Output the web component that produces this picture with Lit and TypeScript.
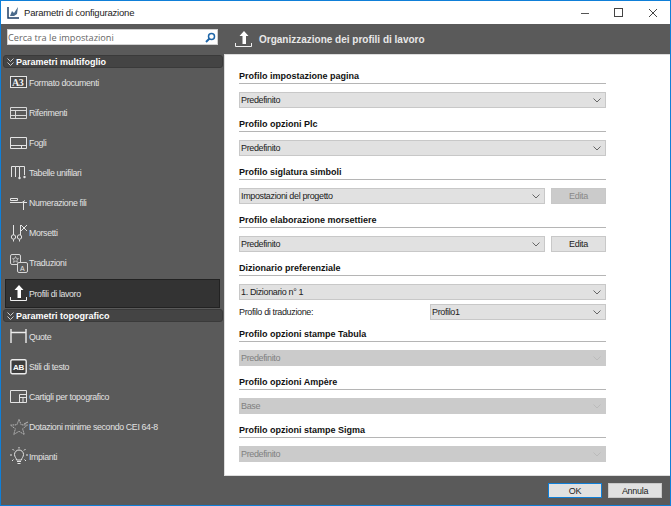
import {LitElement, html, css, svg} from 'lit';
import {customElement} from 'lit/decorators.js';

// sidebar icons, all on a 20x20 box
const icons: Record<string, any> = {
  a3: svg`<rect x="0.5" y="3.500" width="16" height="11" fill="#4a4a4a" stroke="#e4e4e4"/><text x="2" y="13" font-family="Liberation Serif" font-weight="700" font-size="10" fill="#f2f2f2">A3</text>`,
  rif: svg`<path d="M0.5 4.500h16v11h-16z M0.5 7.500h16 M0.5 12.500h16 M5.500 7.500v8" fill="none" stroke="#d8d8d8"/>`,
  fogli: svg`<path d="M0.5 4.500h16v11h-16z M0.5 12.500h16 M11.500 12.500v3" fill="none" stroke="#e4e4e4"/>`,
  tab: svg`<path d="M1.500 14V3.500h4V14 M5.500 3.500h4V14 M9.500 3.500h5V12" fill="none" stroke="#e4e4e4"/><circle cx="9.500" cy="15" r="1.200" fill="#e4e4e4"/><circle cx="14.500" cy="14" r="1.200" fill="#e4e4e4"/>`,
  num: svg`<path d="M0.5 5.500h7v2h-7z M0 9.500h12l3-2 M12.500 9.500H17 M13.500 10v7" fill="none" stroke="#e4e4e4"/>`,
  mors: svg`<path d="M3.500 2v10 M10.500 2v10 M11 2l6 6 M17 2l-6 6" fill="none" stroke="#e4e4e4"/><circle cx="3.500" cy="14" r="2.200" fill="none" stroke="#e4e4e4"/><circle cx="9.500" cy="14" r="2.200" fill="none" stroke="#e4e4e4"/><path d="M3.500 16.500v2 M9.500 16.500v2" stroke="#e4e4e4"/>`,
  trad: svg`<rect x="0.5" y="1.500" width="10" height="10" rx="1.500" fill="none" stroke="#d8d8d8"/><path d="M5.500 3.500l1 2.200h2l-1.600 1.500.6 2.200-2-1.200-2 1.200.6-2.200-1.600-1.500h2z" fill="none" stroke="#d8d8d8" stroke-width="0.7"/><rect x="7.500" y="9.500" width="10" height="10" rx="1.500" fill="#5a5a5a" stroke="#d8d8d8"/><text x="10" y="17.500" font-family="Liberation Sans" font-size="7" fill="#e4e4e4">A</text>`,
  prof: svg`<path d="M9 1l4.500 5H11v8H7.500V6H4.500z" fill="#fff"/><path d="M0.5 13v3.500h16V13" fill="none" stroke="#f0f0f0"/>`,
  quote: svg`<path d="M1 2v14 M16 2v14 M1 5.500h15" fill="none" stroke="#ececec" stroke-width="1.400"/>`,
  stili: svg`<rect x="0.8" y="2.800" width="15.400" height="14" rx="1.500" fill="#3d3d3d" stroke="#ececec" stroke-width="1.400"/><text x="3" y="13" font-family="Liberation Sans" font-weight="700" font-size="8" fill="#fff">AB</text>`,
  cart: svg`<path d="M0.5 3.500h16v12h-16z M9.500 15.500v-8h7 M9.500 10.500h7 M13 10.500v5" fill="none" stroke="#e4e4e4"/>`,
  dot: svg`<path d="M9 2.500l2.200 5.300 6.300.3-4.900 3.700 1.700 5.700L9 14.300l-5.300 3.200 1.700-5.700L.5 8.100l6.300-.3z" fill="none" stroke="#b8b8b8" stroke-dasharray="1.500 .7"/><path d="M14 7l4-2" stroke="#b8b8b8"/>`,
  imp: svg`<path d="M6.500 13c0-2-2-3-2-5.500a4.500 4.500 0 0 1 9 0c0 2.500-2 3.500-2 5.500z M7 14.500h4 M7.500 16.500h3" fill="none" stroke="#e4e4e4"/><path d="M9 0v1.500 M2.500 2l1.500 1.500 M15.500 2L14 3.500 M0 8h2 M16 8h2 M3.500 12.500l-1.500 1.500 M14.500 12.500l1.500 1.500" stroke="#e4e4e4"/>`,
};

const multi = [
  ['a3', 'Formato documenti'],
  ['rif', 'Riferimenti'],
  ['fogli', 'Fogli'],
  ['tab', 'Tabelle unifilari'],
  ['num', 'Numerazione fili'],
  ['mors', 'Morsetti'],
  ['trad', 'Traduzioni'],
  ['prof', 'Profili di lavoro'],
];
const topo = [
  ['quote', 'Quote'],
  ['stili', 'Stili di testo'],
  ['cart', 'Cartigli per topografico'],
  ['dot', 'Dotazioni minime secondo CEI 64-8'],
  ['imp', 'Impianti'],
];

@customElement('app-root')
export class AppRoot extends LitElement {
  static styles = css`
    :host {
      display: block;
      font-family: "Liberation Sans", sans-serif;
    }
    .window {
      width: 671px;
      height: 506px;
      box-sizing: border-box;
      border: 1px solid #0f7fd8;
      display: flex;
      flex-direction: column;
      background: #5a5a5a;
      overflow: hidden;
    }
    .titlebar {
      height: 23px;
      background: #fff;
      display: flex;
      align-items: center;
      padding-left: 6px;
      flex: none;
    }
    .titlebar .name {
      font-size: 9.500px;
      letter-spacing: -0.2px;
      color: #222;
      margin-left: 4px;
      flex: 1;
    }
    .winbtn {
      width: 34px;
      height: 23px;
      display: flex;
      align-items: center;
      justify-content: center;
    }
    .body {
      flex: 1;
      display: flex;
      min-height: 0;
    }
    .sidebar {
      width: 223px;
      flex: none;
      padding-top: 5px;
      box-sizing: border-box;
    }
    .search {
      margin-left: 6px;
      width: 211px;
      height: 16px;
      box-sizing: border-box;
      background: #fff;
      border: 1px solid #d0d0d0;
      display: flex;
      align-items: center;
      justify-content: space-between;
      padding: 0 1px 0 0;
      font-family: "Open Sans", sans-serif;
      font-size: 9.200px;
      color: #666;
    }
    .group {
      margin: 0 1px 0 2px;
      height: 13px;
      box-sizing: border-box;
      background: #444;
      border: 1px solid #3a3a3a;
      border-radius: 3px;
      display: flex;
      align-items: center;
      gap: 2px;
      padding-left: 3px;
      font-size: 9px;
      font-weight: 700;
      color: #fff;
    }
    .group.first {
      margin-top: 10px;
    }
    .group.second {
      margin-top: 1px;
    }
    .item {
      height: 30px;
      box-sizing: border-box;
      display: flex;
      align-items: center;
      padding-left: 9px;
      font-size: 8.800px;
      letter-spacing: -0.35px;
      color: #e2e2e2;
    }
    .item svg {
      width: 20px;
      height: 20px;
      flex: none;
      overflow: visible;
      margin-right: -1px;
    }
    .item.sel {
      height: 29px;
      margin: 1px 4px 0 4px;
      background: #333;
      border: 1px solid #222;
      padding-left: 4px;
    }
    .main {
      flex: 1;
      display: flex;
      flex-direction: column;
      min-width: 0;
    }
    .head {
      height: 30px;
      flex: none;
      display: flex;
      align-items: center;
      gap: 6px;
      padding-left: 11px;
      font-size: 10px;
      font-weight: 700;
      color: #e8e8e8;
    }
    .panel {
      flex: 1;
      background: #fff;
      border: 1px solid #ddd;
      border-right: none;
      padding: 15px 0 0 14px;
      box-sizing: border-box;
      min-height: 0;
    }
    .sec {
      width: 367px;
    }
    .sec h3 {
      margin: 0;
      height: 14px;
      box-sizing: border-box;
      line-height: 13px;
      font-size: 9px;
      font-weight: 700;
      color: #111;
      border-bottom: 1px solid #b5b5b5;
    }
    .row {
      display: flex;
      gap: 6px;
      margin-top: 8px;
      margin-bottom: 10px;
      height: 16px;
    }
    .sel-box {
      flex: 1;
      box-sizing: border-box;
      background: #e1e1e1;
      border: 1px solid #c8c8c8;
      display: flex;
      align-items: center;
      justify-content: space-between;
      padding: 0 4px 0 1px;
      font-size: 9px;
      letter-spacing: -0.36px;
      color: #222;
    }
    .sel-box.off {
      background: #cbcbcb;
      border-color: #cbcbcb;
      color: #808080;
    }
    .btn {
      width: 55px;
      flex: none;
      box-sizing: border-box;
      background: #e1e1e1;
      border: 1px solid #c8c8c8;
      display: flex;
      align-items: center;
      justify-content: center;
      font-size: 9px;
      letter-spacing: -0.3px;
      color: #222;
    }
    .btn.off {
      background: #cbcbcb;
      color: #888;
    }
    .row.tight {
      margin-bottom: 4px;
    }
    .row.sub {
      margin-top: 0;
      margin-bottom: 8px;
      align-items: center;
      gap: 0;
      font-size: 9px;
      letter-spacing: -0.36px;
      color: #222;
    }
    .row.sub .lab {
      width: 191px;
      flex: none;
    }
    .row.sub .sel-box {
      height: 16px;
    }
    .footer {
      height: 29px;
      flex: none;
      display: flex;
      justify-content: flex-end;
      align-items: center;
      gap: 6px;
      padding: 0 8px 0 0;
    }
    .footer .btn {
      height: 15px;
      width: 54px;
    }
    .footer .ok {
      border: 1px solid #0f7fd8;
    }
  `;

  chevron(color = '#666') {
    return html`<svg width="8" height="5" viewBox="0 0 8 5"><path d="M.5 .5L4 4l3.500-3.500" fill="none" stroke=${color}/></svg>`;
  }

  dbl() {
    return html`<svg width="7" height="8" viewBox="0 0 7 8"><path d="M.5 .5L3.500 3.500 6.500 .5 M.5 4.500L3.500 7.500 6.500 4.500" fill="none" stroke="#ccc"/></svg>`;
  }

  item(it: string[]) {
    return html`<div class="item ${it[0] === 'prof' ? 'sel' : ''}"><svg viewBox="0 0 20 20">${icons[it[0]]}</svg><span>${it[1]}</span></div>`;
  }

  section(title: string, value: string, off = false, edit = '') {
    return html`<div class="sec"><h3>${title}</h3>
      <div class="row">
        <div class="sel-box ${off ? 'off' : ''}">${value}${this.chevron(off ? '#bbb' : '#666')}</div>
        ${edit ? html`<div class="btn ${edit === 'off' ? 'off' : ''}">Edita</div>` : ''}
      </div></div>`;
  }

  render() {
    return html`<div class="window">
      <div class="titlebar">
        <svg width="13" height="13" viewBox="0 0 13 13"><path d="M1 1v11h11" fill="none" stroke="#1f3f66" stroke-width="1.500"/><path d="M3 10l2-5 2 2 4-6-1 7-3 2z" fill="#4a6a8a"/></svg>
        <span class="name">Parametri di configurazione</span>
        <div class="winbtn"><svg width="10" height="10" viewBox="0 0 10 10"><path d="M1 5.500h8" stroke="#555"/></svg></div>
        <div class="winbtn"><svg width="10" height="10" viewBox="0 0 10 10"><rect x=".5" y=".5" width="8" height="8" fill="none" stroke="#444"/></svg></div>
        <div class="winbtn"><svg width="10" height="10" viewBox="0 0 10 10"><path d="M1 1l8 8 M9 1l-8 8" stroke="#444"/></svg></div>
      </div>
      <div class="body">
        <div class="sidebar">
          <div class="search"><span>Cerca tra le impostazioni</span>
            <svg width="11" height="11" viewBox="0 0 11 11"><circle cx="6.500" cy="4.500" r="3" fill="none" stroke="#1f66a8" stroke-width="1.500"/><path d="M4.500 6.500L1 10" stroke="#1f66a8" stroke-width="2"/></svg>
          </div>
          <div class="group first">${this.dbl()}Parametri multifoglio</div>
          ${multi.map((it) => this.item(it))}
          <div class="group second">${this.dbl()}Parametri topografico</div>
          ${topo.map((it) => this.item(it))}
        </div>
        <div class="main">
          <div class="head">
            <svg width="18" height="18" viewBox="0 0 18 18"><path d="M9 1l4.500 5H11v8H7.500V6H4.500z" fill="#fff"/><path d="M.5 13v3.500h16V13" fill="none" stroke="#f0f0f0"/></svg>
            <span>Organizzazione dei profili di lavoro</span>
          </div>
          <div class="panel">
            ${this.section('Profilo impostazione pagina', 'Predefinito')}
            ${this.section('Profilo opzioni Plc', 'Predefinito')}
            ${this.section('Profilo siglatura simboli', 'Impostazioni del progetto', false, 'off')}
            ${this.section('Profilo elaborazione morsettiere', 'Predefinito', false, 'on')}
            <div class="sec"><h3>Dizionario preferenziale</h3>
              <div class="row tight"><div class="sel-box">1. Dizionario n° 1${this.chevron()}</div></div>
              <div class="row sub"><span class="lab">Profilo di traduzione:</span><div class="sel-box">Profilo1${this.chevron()}</div></div>
            </div>
            ${this.section('Profilo opzioni stampe Tabula', 'Predefinito', true)}
            ${this.section('Profilo opzioni Ampère', 'Base', true)}
            ${this.section('Profilo opzioni stampe Sigma', 'Predefinito', true)}
          </div>
          <div class="footer">
            <div class="btn ok">OK</div>
            <div class="btn">Annula</div>
          </div>
        </div>
      </div>
    </div>`;
  }
}
